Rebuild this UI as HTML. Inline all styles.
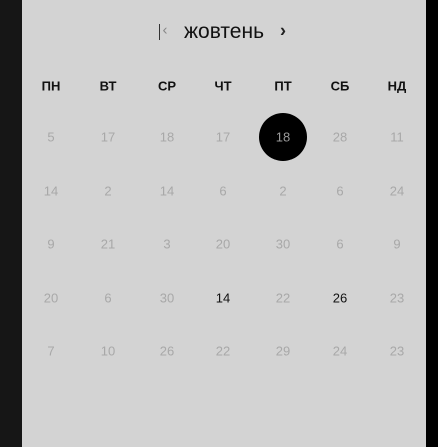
<!DOCTYPE html>
<html><head><style>
body{margin:0;width:438px;height:447px;background:#000;position:relative;overflow:hidden;font-family:"Liberation Sans",sans-serif}
#l{position:absolute;left:0;top:0;width:22px;height:447px;background:#161616}
#p{position:absolute;left:22px;top:0;width:404px;height:447px;background:#d3d3d3}
.t{position:absolute;transform:translate(-50%,-50%);white-space:nowrap}
.w{font-weight:bold;font-size:13px;color:#111}
.n{font-size:13px;color:#a8a8a8}
.b{color:#111}
.s{color:#9a9a9a}
#c{position:absolute;left:259px;top:113px;width:48px;height:48px;border-radius:50%;background:#000}
</style></head><body>
<div id="l"></div><div id="p"></div>
<div style="position:absolute;left:159px;top:24px;width:1px;height:16px;background:#333"></div>
<div class="t" style="left:165px;top:30px;font-size:15px;color:#888">‹</div>
<div class="t" style="left:224px;top:32px;font-size:21px;color:#111">жовтень</div>
<div class="t" style="left:283px;top:31px;font-size:18px;color:#222;font-weight:bold">›</div>
<div id="c"></div>
<div id="g"></div>
<script>
var xs=[51,108,167,223,283,340,397],ys=[137,191,244,298,351];
var w=["ПН","ВТ","СР","ЧТ","ПТ","СБ","НД"];
var d=[[5,17,18,17,18,28,11],[14,2,14,6,2,6,24],[9,21,3,20,30,6,9],[20,6,30,14,22,26,23],[7,10,26,22,29,24,23]];
var h="";
w.forEach((s,i)=>h+='<div class="t w" style="left:'+xs[i]+'px;top:86px">'+s+'</div>');
d.forEach((r,j)=>r.forEach((v,i)=>{var c="n";if(j==3&&(i==3||i==5))c="n b";if(j==0&&i==4)c="n s";h+='<div class="t '+c+'" style="left:'+xs[i]+'px;top:'+ys[j]+'px">'+v+'</div>';}));
document.getElementById("g").innerHTML=h;
</script>
</body></html>
